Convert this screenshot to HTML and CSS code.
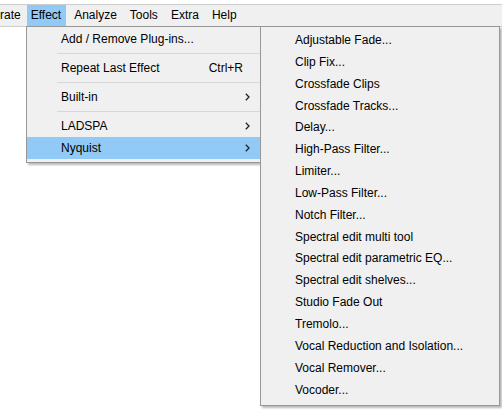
FILE: index.html
```html
<!DOCTYPE html>
<html>
<head>
<meta charset="utf-8">
<link rel="stylesheet" href="styles.css">
</head>
<body>
<div class="app">
  <div class="menubar">
    <span class="mb-item mb-first">rate</span>
    <span class="mb-item mb-active">Effect</span>
    <span class="mb-item">Analyze</span>
    <span class="mb-item">Tools</span>
    <span class="mb-item">Extra</span>
    <span class="mb-item">Help</span>
  </div>
  <div class="workspace"></div>

  <div class="menu menu-main">
    <div class="item"><span class="label">Add / Remove Plug-ins...</span><span class="arrow"></span></div>
    <div class="sep"></div>
    <div class="item"><span class="label">Repeat Last Effect</span><span class="shortcut">Ctrl+R</span><span class="arrow"></span></div>
    <div class="sep"></div>
    <div class="item"><span class="label">Built-in</span><span class="arrow"><svg width="5" height="8" viewBox="0 0 5 8"><path d="M0.8 0.8 L4 4 L0.8 7.2" fill="none" stroke="#222" stroke-width="1.3"/></svg></span></div>
    <div class="sep"></div>
    <div class="item"><span class="label">LADSPA</span><span class="arrow"><svg width="5" height="8" viewBox="0 0 5 8"><path d="M0.8 0.8 L4 4 L0.8 7.2" fill="none" stroke="#222" stroke-width="1.3"/></svg></span></div>
    <div class="item item-active"><span class="label">Nyquist</span><span class="arrow"><svg width="5" height="8" viewBox="0 0 5 8"><path d="M0.8 0.8 L4 4 L0.8 7.2" fill="none" stroke="#222" stroke-width="1.3"/></svg></span></div>
  </div>

  <div class="menu menu-sub">
    <div class="sitem">Adjustable Fade...</div>
    <div class="sitem">Clip Fix...</div>
    <div class="sitem">Crossfade Clips</div>
    <div class="sitem">Crossfade Tracks...</div>
    <div class="sitem">Delay...</div>
    <div class="sitem">High-Pass Filter...</div>
    <div class="sitem">Limiter...</div>
    <div class="sitem">Low-Pass Filter...</div>
    <div class="sitem">Notch Filter...</div>
    <div class="sitem">Spectral edit multi tool</div>
    <div class="sitem">Spectral edit parametric EQ...</div>
    <div class="sitem">Spectral edit shelves...</div>
    <div class="sitem">Studio Fade Out</div>
    <div class="sitem">Tremolo...</div>
    <div class="sitem">Vocal Reduction and Isolation...</div>
    <div class="sitem">Vocal Remover...</div>
    <div class="sitem">Vocoder...</div>
  </div>
</div>
</body>
</html>
```

FILE: styles.css
```css
* { box-sizing: border-box; }
html, body {
  margin: 0;
  padding: 0;
  background: #ffffff;
}
body {
  font-family: "Liberation Sans", Arial, sans-serif;
  font-size: 12px;
  color: #000;
}
.app {
  position: relative;
  width: 502px;
  height: 411px;
  overflow: hidden;
  background: #ffffff;
}
.menubar {
  margin-top: 4px;
  height: 23px;
  border-top: 1px solid #cdcdcd;
  border-bottom: 1px solid #cdcdcd;
  background: #f0f0f0;
  display: flex;
  gap: 4px;
}
.mb-item {
  height: 21px;
  line-height: 21px;
  padding: 0 5px 0 4px;
  white-space: nowrap;
}
.mb-first {
  padding: 0 2px 0 0;
}
.mb-active {
  background: #91c9f7;
}
.workspace {
  height: 300px;
}
.menu {
  position: absolute;
  top: 26px;
  background: #f0f0f0;
  border: 1px solid #979797;
  box-shadow: 2px 2px 2px rgba(0, 0, 0, 0.28);
}
.menu-main {
  left: 26px;
  width: 240px;
  padding: 1px 0 3px;
}
.menu-sub {
  left: 260px;
  width: 240px;
  padding: 3px 0 4px;
}
.item {
  height: 22px;
  display: flex;
  align-items: center;
  padding: 0 15px 0 34px;
  white-space: nowrap;
}
.item-active {
  background: #91c9f7;
}
.label {
  flex: 1;
}
.shortcut {
  margin-right: 2px;
}
.arrow {
  width: 5px;
  height: 8px;
  display: flex;
}
.sep {
  height: 7px;
  padding-top: 3px;
  padding-left: 30px;
  padding-right: 4px;
}
.sep::before {
  content: "";
  display: block;
  height: 1px;
  background: #d7d7d7;
}
.sitem {
  height: 21.85px;
  line-height: 21.85px;
  padding-left: 34px;
  white-space: nowrap;
}
```
